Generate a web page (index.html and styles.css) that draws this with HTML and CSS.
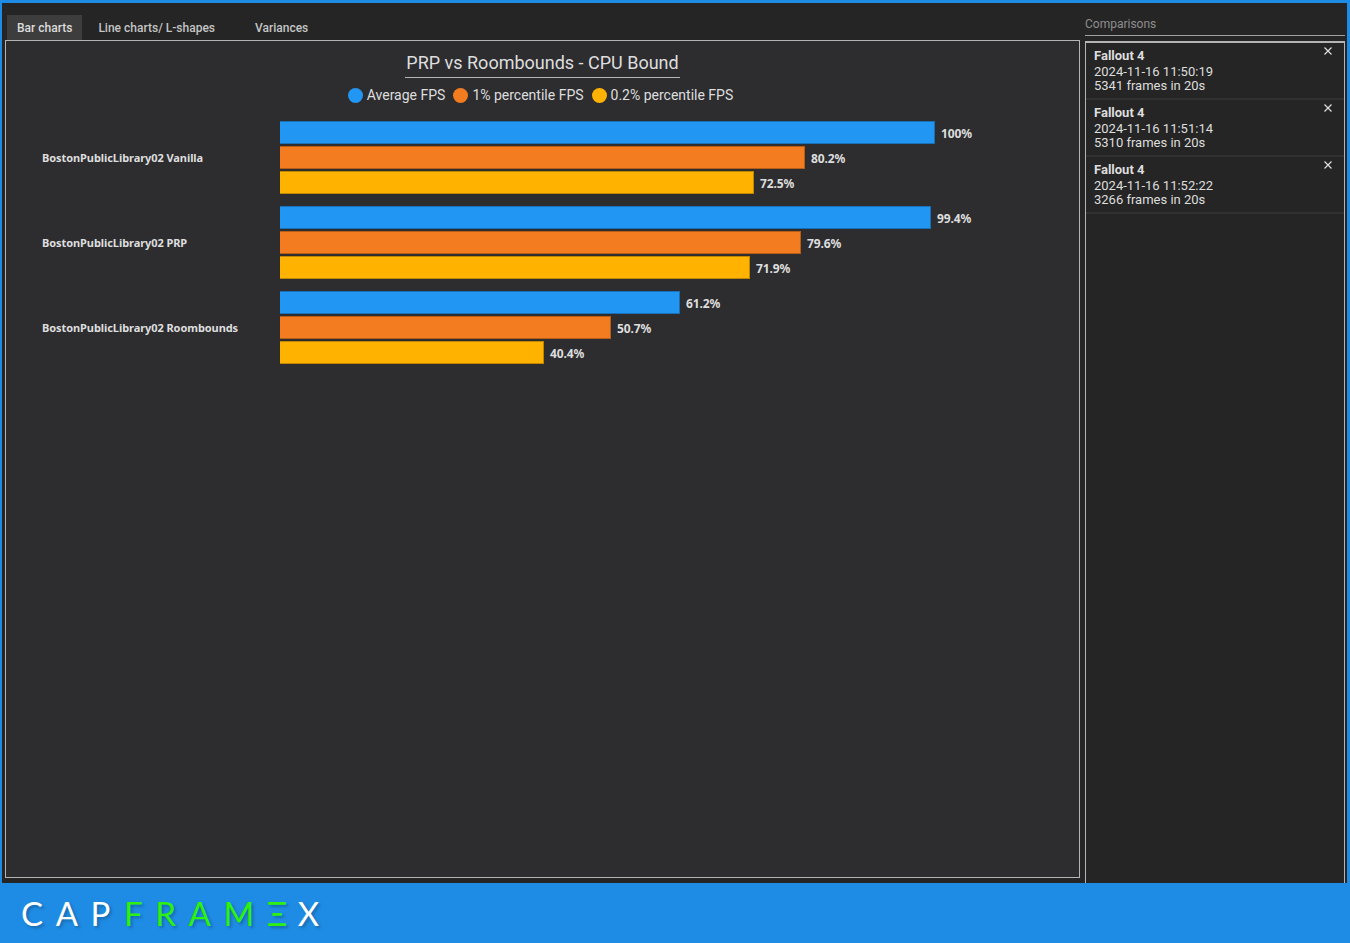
FILE: index.html
```html
<!DOCTYPE html>
<html lang="en">

<head>
    <meta charset="UTF-8">
    <meta name="viewport" content="width=device-width, initial-scale=1.0">
    <title>CapFrameX</title>
    <link rel="stylesheet" href="styles.css">
</head>

<body>
    <div class="app">
        <div class="workspace">
            <!-- chart side -->
            <section class="charts">
                <nav class="tabs">
                    <span class="tab active">Bar charts</span>
                    <span class="tab tab-line">Line charts/ L-shapes</span>
                    <span class="tab tab-var">Variances</span>
                </nav>
                <div class="panel">
                    <div class="title-row">
                        <h1 class="chart-title">PRP vs Roombounds - CPU Bound</h1>
                    </div>
                    <div class="legend">
                        <span class="legend-item"><i class="dot blue"></i>Average FPS</span>
                        <span class="legend-item"><i class="dot orange"></i>1% percentile FPS</span>
                        <span class="legend-item"><i class="dot yellow"></i>0.2% percentile FPS</span>
                    </div>
                    <div class="groups">
                        <div class="group">
                            <div class="group-name">BostonPublicLibrary02 Vanilla</div>
                            <div class="bars">
                                <div class="bar-row"><div class="bar blue" style="width: 655px"></div><span class="bar-value">100%</span></div>
                                <div class="bar-row"><div class="bar orange" style="width: 525px"></div><span class="bar-value">80.2%</span></div>
                                <div class="bar-row"><div class="bar yellow" style="width: 474px"></div><span class="bar-value">72.5%</span></div>
                            </div>
                        </div>
                        <div class="group">
                            <div class="group-name">BostonPublicLibrary02 PRP</div>
                            <div class="bars">
                                <div class="bar-row"><div class="bar blue" style="width: 651px"></div><span class="bar-value">99.4%</span></div>
                                <div class="bar-row"><div class="bar orange" style="width: 521px"></div><span class="bar-value">79.6%</span></div>
                                <div class="bar-row"><div class="bar yellow" style="width: 470px"></div><span class="bar-value">71.9%</span></div>
                            </div>
                        </div>
                        <div class="group">
                            <div class="group-name">BostonPublicLibrary02 Roombounds</div>
                            <div class="bars">
                                <div class="bar-row"><div class="bar blue" style="width: 400px"></div><span class="bar-value">61.2%</span></div>
                                <div class="bar-row"><div class="bar orange" style="width: 331px"></div><span class="bar-value">50.7%</span></div>
                                <div class="bar-row"><div class="bar yellow" style="width: 264px"></div><span class="bar-value">40.4%</span></div>
                            </div>
                        </div>
                    </div>
                </div>
            </section>

            <!-- comparison list -->
            <aside class="side">
                <div class="side-head">Comparisons</div>
                <div class="side-list">
                    <div class="record">
                        <svg class="close" viewBox="0 0 8 8"><path d="M0.5 0.5L7.5 7.5M7.5 0.5L0.5 7.5"></path></svg>
                        <div class="record-game">Fallout 4</div>
                        <div>2024-11-16 11:50:19</div>
                        <div>5341 frames in 20s</div>
                    </div>
                    <div class="record">
                        <svg class="close" viewBox="0 0 8 8"><path d="M0.5 0.5L7.5 7.5M7.5 0.5L0.5 7.5"></path></svg>
                        <div class="record-game">Fallout 4</div>
                        <div>2024-11-16 11:51:14</div>
                        <div>5310 frames in 20s</div>
                    </div>
                    <div class="record">
                        <svg class="close" viewBox="0 0 8 8"><path d="M0.5 0.5L7.5 7.5M7.5 0.5L0.5 7.5"></path></svg>
                        <div class="record-game">Fallout 4</div>
                        <div>2024-11-16 11:52:22</div>
                        <div>3266 frames in 20s</div>
                    </div>
                </div>
            </aside>
        </div>

        <footer class="footer">
            <div class="logo"><span>CAP</span><span class="logo-green">FRAM&#926;</span><span class="logo-end">X</span></div>
        </footer>
    </div>
</body>

</html>
```

FILE: styles.css
```css
* {
    box-sizing: border-box;
}

html,
body {
    margin: 0;
    height: 100%;
}

body {
    background-color: #1e8ce4;
    font-family: Roboto, "Liberation Sans", sans-serif;
    overflow: hidden;
}

.app {
    display: flex;
    flex-direction: column;
    height: 943px;
}

.workspace {
    flex: 1;
    display: flex;
    min-height: 0;
    margin: 3px 3px 0 2px;
    padding-right: 2px;
    gap: 5px;
    background-color: #252525;
}

.charts {
    width: 1078px;
    padding: 12px 0 5px 3px;
    display: flex;
    flex-direction: column;
}

.tabs {
    display: flex;
    height: 25px;
    padding-left: 2px;
    flex-shrink: 0;
}

.tab {
    height: 25px;
    line-height: 26px;
    font-size: 12px;
    font-weight: 500;
    color: #c4c4c4;
    padding: 0 10px;
}

.tab.active {
    background-color: #3d3d3d;
    color: #dcdcdc;
}

.tab-line {
    padding: 0 6px 0 16px;
    margin-right: 34px;
}

.tab-var {
    padding: 0 0 0 0;
}

.panel {
    flex: 1;
    border: 1px solid #b4b4b4;
    background-color: #2d2d30;
}

.title-row {
    display: flex;
    justify-content: center;
    padding-top: 10px;
}

.chart-title {
    margin: 0;
    padding: 0 1px 3px;
    height: 27px;
    border-bottom: 1px solid #b4b4b4;
    font-size: 18px;
    line-height: 23px;
    font-weight: 400;
    color: #dedede;
}

.legend {
    display: flex;
    justify-content: center;
    gap: 8px;
    margin-top: 7px;
    padding-right: 4px;
    height: 20px;
    font-size: 14px;
    line-height: 20px;
    color: #dedede;
}

.legend-item {
    display: flex;
    align-items: center;
    gap: 4px;
}

.dot {
    width: 15px;
    height: 15px;
    border-radius: 50%;
}

.blue {
    background-color: #2196f3;
}

.orange {
    background-color: #f37c20;
}

.yellow {
    background-color: #ffb300;
}

.groups {
    display: flex;
    flex-direction: column;
    gap: 12px;
    margin-top: 16px;
    padding-left: 36px;
}

.group {
    display: flex;
    align-items: center;
}

.group-name {
    width: 238px;
    font-family: "Noto Sans", sans-serif;
    font-size: 11px;
    font-weight: 700;
    letter-spacing: -0.07px;
    color: #dedede;
}

.bars {
    display: flex;
    flex-direction: column;
    gap: 2px;
}

.bar-row {
    display: flex;
    align-items: center;
    height: 23px;
}

.bar {
    height: 23px;
    border: 1px solid rgba(0, 0, 0, 0.25);
    border-left: 0;
}

.bar-value {
    margin-left: 6px;
    padding-top: 2px;
    font-family: "Noto Sans", sans-serif;
    font-size: 12px;
    font-weight: 700;
    letter-spacing: -0.1px;
    color: #dedede;
}

.side {
    width: 260px;
    display: flex;
    flex-direction: column;
    padding-top: 12px;
}

.side-head {
    height: 21px;
    font-size: 12px;
    line-height: 18px;
    color: #8e8e8e;
    border-bottom: 1px solid #a0a0a0;
    flex-shrink: 0;
}

.side-list {
    flex: 1;
    margin-top: 5px;
    border: 1px solid #b4b4b4;
    border-bottom: 0;
    border-top-width: 2px;
}

.record {
    position: relative;
    height: 57px;
    padding: 4px 7px 0 8px;
    border-bottom: 2px solid #313131;
    font-size: 13px;
    line-height: 14px;
    color: #dedede;
}

.record-game {
    font-weight: 700;
    line-height: 18px;
}

.close {
    position: absolute;
    top: 4px;
    right: 12px;
    width: 8px;
    height: 8px;
    fill: none;
    stroke: #e4e4e4;
    stroke-width: 1.1;
}

.footer {
    height: 60px;
    flex-shrink: 0;
    padding-left: 21px;
    display: flex;
    align-items: center;
}

.logo {
    display: flex;
    font-family: Lato, "Open Sans", sans-serif;
    font-size: 33px;
    font-weight: 400;
    line-height: 60px;
    letter-spacing: 12.6px;
    color: #ffffff;
    text-shadow: 2px 2px 3px rgba(0, 0, 0, 0.25);
}

.logo-green {
    margin-left: 1px;
    color: #2df10e;
}

.logo-end {
    margin-left: -2px;
}
```
